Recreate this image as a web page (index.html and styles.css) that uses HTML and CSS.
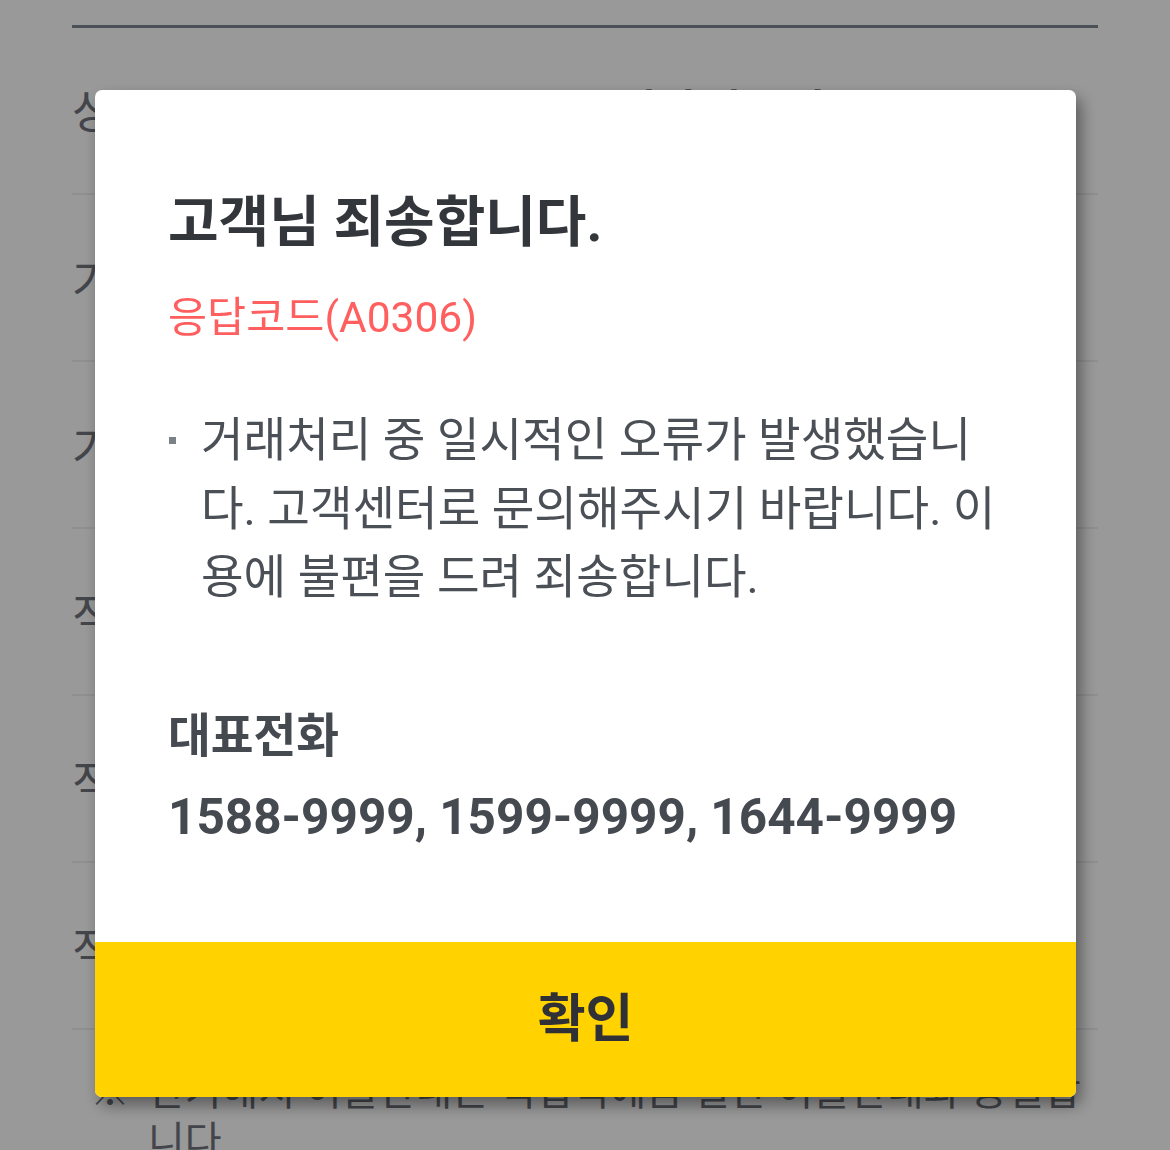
FILE: index.html
```html
<!DOCTYPE html>
<html lang="ko">
<head>
<meta charset="utf-8">
<title>응답코드 안내</title>
<link rel="stylesheet" href="styles.css">
</head>
<body>
<div class="page">
  <div class="rows">
    <div class="row"><span class="label">상품명</span><span class="value">KB내맘대로적금</span></div>
    <div class="row"><span class="label">가입기간</span><span class="value">12개월</span></div>
    <div class="row"><span class="label">가입금액</span><span class="value">100,000원</span></div>
    <div class="row"><span class="label">적용금리</span><span class="value">연 2.50%</span></div>
    <div class="row"><span class="label">적립방식</span><span class="value">자유적립</span></div>
    <div class="row"><span class="label">적립일자</span><span class="value">매월 25일</span></div>
  </div>
  <div class="note"><span class="note-mark">※</span><span class="note-text">만기해지 이율안내는 적립식예금 일반 이율안내와 동일합니다.</span></div>
</div>

<div class="dim"></div>

<div class="modal" role="dialog">
  <div class="modal-body">
    <h1 class="title">고객님 죄송합니다.</h1>
    <p class="code">응답코드(A0306)</p>
    <ul class="msg">
      <li>거래처리 중 일시적인 오류가 발생했습니다. 고객센터로 문의해주시기 바랍니다. 이용에 불편을 드려 죄송합니다.</li>
    </ul>
    <h2 class="tel-title">대표전화</h2>
    <p class="tel">1588-9999, 1599-9999, 1644-9999</p>
  </div>
  <button class="confirm" type="button">확인</button>
</div>
</body>
</html>
```

FILE: styles.css
```css
* { box-sizing: border-box; }

html, body {
  margin: 0;
  padding: 0;
}

body {
  width: 1170px;
  height: 1150px;
  overflow: hidden;
  background: #ffffff;
  font-family: Roboto, "Noto Sans CJK KR", sans-serif;
}

.page {
  padding: 25px 72px 0;
}

.rows {
  border-top: 3px solid #7e868f;
}

.row {
  display: flex;
  align-items: center;
  height: 167px;
  border-bottom: 2px solid #eceef0;
}

.row:first-child {
  padding-bottom: 6px;
}

.label {
  width: 483px;
  font-size: 46px;
  color: #70747c;
}

.value {
  font-size: 46px;
  font-weight: 700;
  color: #222428;
}

.note {
  display: flex;
  margin-top: 37px;
  padding-left: 18px;
  font-size: 40px;
  line-height: 50px;
  color: #70747c;
}

.note-mark {
  flex: 0 0 58px;
}

.note-text {
  flex: 1;
  word-break: break-all;
}

.dim {
  position: fixed;
  inset: 0;
  background: rgba(0, 0, 0, 0.4);
}

.modal {
  position: fixed;
  left: 95px;
  top: 90px;
  width: 981px;
  height: 1007px;
  display: flex;
  flex-direction: column;
  background: #ffffff;
  border-radius: 7px;
  overflow: hidden;
  box-shadow: 5px 8px 16px rgba(0, 0, 0, 0.42);
}

.modal-body {
  flex: 1;
  padding: 97px 78px 0 73px;
}

.title {
  margin: 0;
  font-size: 55px;
  line-height: 70px;
  font-weight: 700;
  color: #33363b;
}

.code {
  margin: 33px 0 0;
  font-size: 42.5px;
  line-height: 56px;
  color: #ff5f5f;
}

.msg {
  list-style: none;
  margin: 60px 0 0;
  padding: 0;
}

.msg li {
  position: relative;
  padding-left: 33px;
  font-size: 46.3px;
  line-height: 68.5px;
  color: #4b4f56;
  word-break: break-all;
}

.msg li::before {
  content: "";
  position: absolute;
  left: 1px;
  top: 31px;
  width: 7px;
  height: 7px;
  background: #7c8088;
}

.tel-title {
  margin: 94px 0 0;
  font-size: 46.5px;
  line-height: 60px;
  font-weight: 700;
  color: #454950;
}

.tel {
  margin: 16px 0 0;
  font-size: 49.5px;
  line-height: 70px;
  font-weight: 700;
  color: #454950;
}

.confirm {
  flex: 0 0 155px;
  width: 100%;
  border: 0;
  margin: 0;
  padding: 0;
  background: #ffd200;
  font-family: inherit;
  font-size: 52px;
  line-height: 60px;
  font-weight: 700;
  color: #2f3136;
}
```
